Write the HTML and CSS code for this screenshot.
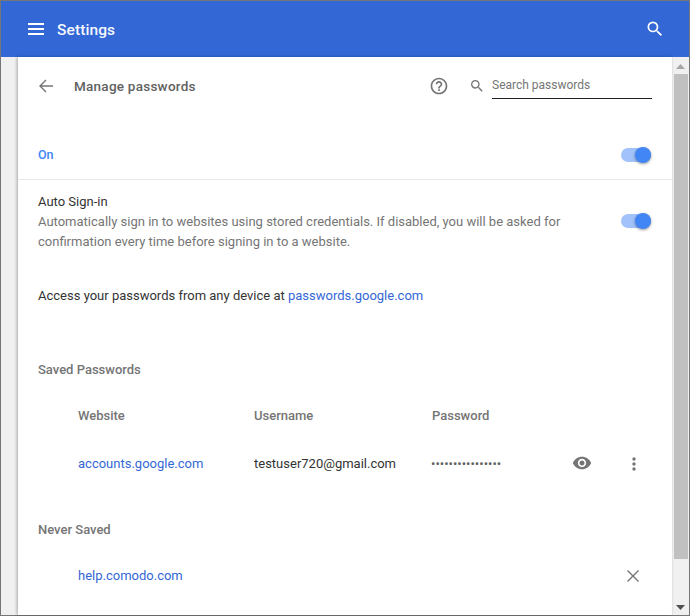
FILE: index.html
```html
<!DOCTYPE html>
<html lang="en">
<head>
<meta charset="utf-8">
<title>Settings</title>
<link rel="stylesheet" href="styles.css">
</head>
<body>
<div class="window">
  <header class="appbar">
    <svg class="menu-icon" width="18" height="12" viewBox="0 0 18 12"><path d="M1 1h16M1 6h16M1 11h16" stroke="#fff" stroke-width="2" fill="none"/></svg>
    <span class="appbar-title">Settings</span>
    <svg class="appbar-search" width="20" height="20" viewBox="0 0 24 24"><path fill="#fff" d="M15.5 14h-.79l-.28-.27A6.47 6.47 0 0 0 16 9.5 6.5 6.5 0 1 0 9.5 16c1.61 0 3.09-.59 4.23-1.57l.27.28v.79l5 4.99L20.49 19l-4.99-5zm-6 0C7.01 14 5 11.99 5 9.5S7.01 5 9.5 5 14 7.01 14 9.5 11.99 14 9.5 14z"/></svg>
  </header>
  <div class="body">
    <div class="gutter"></div>
    <main class="card">
      <div class="toolbar">
        <svg class="back" width="16" height="16" viewBox="0 0 16 16"><path d="M15 8H2M8 2L2 8l6 6" stroke="#757575" stroke-width="1.4" fill="none"/></svg>
        <h1 class="page-title">Manage passwords</h1>
        <svg class="help" width="20" height="20" viewBox="0 0 24 24"><path fill="#757575" d="M11 18h2v-2h-2v2zm1-16C6.48 2 2 6.48 2 12s4.48 10 10 10 10-4.48 10-10S17.52 2 12 2zm0 18c-4.41 0-8-3.59-8-8s3.59-8 8-8 8 3.59 8 8-3.59 8-8 8zm0-14c-2.21 0-4 1.79-4 4h2c0-1.1.9-2 2-2s2 .9 2 2c0 2-3 1.75-3 5h2c0-2.25 3-2.5 3-5 0-2.21-1.79-4-4-4z"/></svg>
        <svg class="field-icon" width="16" height="16" viewBox="0 0 24 24"><path fill="#757575" d="M15.5 14h-.79l-.28-.27A6.47 6.47 0 0 0 16 9.5 6.5 6.5 0 1 0 9.5 16c1.61 0 3.09-.59 4.23-1.57l.27.28v.79l5 4.99L20.49 19l-4.99-5zm-6 0C7.01 14 5 11.99 5 9.5S7.01 5 9.5 5 14 7.01 14 9.5 11.99 14 9.5 14z"/></svg>
        <div class="search-field">Search passwords</div>
      </div>
      <div class="row-on">
        <span class="on-label">On</span>
        <span class="toggle"><span class="knob"></span></span>
      </div>
      <div class="row-auto">
        <div class="auto-text">
          <div class="auto-title">Auto Sign-in</div>
          <div class="auto-desc">Automatically sign in to websites using stored credentials. If disabled, you will be asked for confirmation every time before signing in to a website.</div>
        </div>
        <span class="toggle toggle-raised"><span class="knob"></span></span>
      </div>
      <p class="access">Access your passwords from any device at <a class="link" href="#">passwords.google.com</a></p>
      <h2 class="section saved">Saved Passwords</h2>
      <div class="grid head">
        <span>Website</span><span>Username</span><span>Password</span>
      </div>
      <div class="grid entry">
        <a class="link" href="#">accounts.google.com</a>
        <span class="user">testuser720@gmail.com</span>
        <span class="dots">••••••••••••••••</span>
        <svg class="eye" width="20" height="20" viewBox="0 0 24 24"><path fill="#757575" d="M12 4.5C7 4.5 2.73 7.61 1 12c1.73 4.39 6 7.5 11 7.5s9.27-3.11 11-7.5c-1.73-4.39-6-7.5-11-7.5zM12 17c-2.76 0-5-2.24-5-5s2.24-5 5-5 5 2.24 5 5-2.24 5-5 5zm0-8c-1.66 0-3 1.34-3 3s1.34 3 3 3 3-1.34 3-3-1.34-3-3-3z"/></svg>
        <svg class="more" width="4" height="14" viewBox="0 0 4 14"><circle cx="2" cy="2" r="1.7" fill="#757575"/><circle cx="2" cy="7" r="1.7" fill="#757575"/><circle cx="2" cy="12" r="1.7" fill="#757575"/></svg>
      </div>
      <h2 class="section never">Never Saved</h2>
      <div class="never-row">
        <a class="link" href="#">help.comodo.com</a>
        <svg class="close" width="14" height="14" viewBox="0 0 14 14"><path d="M1.5 1.5l11 11M12.5 1.5l-11 11" stroke="#757575" stroke-width="1.4" fill="none"/></svg>
      </div>
    </main>
    <div class="scrollbar">
      <svg class="arrow" width="9" height="5" viewBox="0 0 9 5"><path d="M4.5 0L9 5H0z" fill="#a6a6a6"/></svg>
      <div class="thumb"></div>
      <svg class="arrow-down" width="9" height="5" viewBox="0 0 9 5"><path d="M0 0h9L4.5 5z" fill="#505050"/></svg>
    </div>
  </div>
</div>
</body>
</html>
```
FILE: styles.css
```css
* { box-sizing: border-box; }
html, body { margin: 0; padding: 0; height: 100%; overflow: hidden; }
body { font-family: Roboto, "Liberation Sans", sans-serif; font-size: 13px; color: #333; background: #fff; }
.window { width: 690px; height: 616px; border: 1px solid #767676; display: flex; flex-direction: column; }
.appbar { height: 56px; flex: none; background: #3367d6; display: flex; align-items: center; padding-left: 26px; padding-right: 24px; }
.menu-icon { flex: none; }
.appbar-title { color: #fff; font-size: 15.5px; font-weight: 500; margin-left: 12px; padding-top: 2px; letter-spacing: .1px; opacity: .95; }
.appbar-search { margin-left: auto; }
.body { flex: 1; display: flex; min-height: 0; }
.gutter { width: 17px; flex: none; background: #f0f0f0; }
.card { width: 654px; flex: none; background: #fff; box-shadow: -1px 0 3px rgba(0,0,0,.3); overflow: hidden; position: relative; }
.toolbar { height: 58px; display: flex; align-items: center; padding-left: 20px; }
.back { flex: none; }
.page-title { margin: -1px 0 0 20px; font-size: 13.5px; font-weight: 500; color: #616161; letter-spacing: .25px; width: 355px; line-height: 16px; flex: none; }
.help { flex: none; }
.field-icon { flex: none; margin-left: 20px; margin-top: -1px; }
.search-field { width: 160px; height: 27px; margin-left: 7px; margin-top: -1px; border-bottom: 1px solid #212121; color: #757575; font-size: 12px; line-height: 26px; flex: none; }
.row-on { height: 50px; margin-top: 15px; display: flex; align-items: center; justify-content: space-between; padding: 0 21px 0 20px; border-bottom: 1px solid #e8e8e8; }
.on-label { color: #4285f4; font-weight: 500; font-size: 12.5px; }
.toggle { width: 30px; height: 14px; border-radius: 7px; background: #a1c2fa; position: relative; display: block; flex: none; }
.toggle-raised { margin-bottom: 2px; }
.knob { position: absolute; right: 0; top: -1px; width: 16px; height: 16px; border-radius: 50%; background: #4285f4; box-shadow: 0 1px 3px rgba(0,0,0,.4); }
.row-auto { display: flex; align-items: center; justify-content: space-between; padding: 12px 21px 0 20px; }
.auto-text { width: 540px; }
.auto-title { color: #333; line-height: 20px; font-size: 13px; }
.auto-desc { color: #757575; line-height: 20px; font-size: 13px; }
.access { margin: 34px 0 0; padding-left: 20px; line-height: 20px; color: #333; font-size: 13px; }
.link { color: #3367d6; text-decoration: none; font-size: 13px; }
.section { margin: 0; padding-left: 20px; font-size: 13px; font-weight: 500; color: #757575; line-height: 20px; }
.saved { margin-top: 54px; }
.grid { display: flex; align-items: center; padding-left: 60px; }
.grid > span:nth-child(1), .grid > .link { width: 176px; flex: none; }
.grid > span:nth-child(2) { width: 178px; flex: none; }
.head { margin-top: 25px; height: 20px; font-weight: 500; color: #757575; font-size: 13px; }
.entry { margin-top: 28px; height: 20px; }
.user { color: #333; font-size: 13px; }
.dots { width: 129px; margin-left: -1px; flex: none; font-size: 13px; color: #616161; }
.eye { flex: none; margin-left: 12px; }
.more { flex: none; margin-left: 40px; margin-top: 1px; }
.never { margin-top: 47px; }
.never-row { margin-top: 25px; height: 20px; display: flex; align-items: center; justify-content: space-between; padding: 0 32px 0 60px; }
.close { margin-top: 1px; }
.scrollbar { width: 17px; flex: none; background: #f0f0f0; display: flex; flex-direction: column; align-items: center; padding: 7px 0 5px 0; }
.arrow { flex: none; }
.thumb { width: 14px; height: 485px; margin-top: 5px; background: #c0c0c0; }
.arrow-down { flex: none; margin-top: auto; }
```
